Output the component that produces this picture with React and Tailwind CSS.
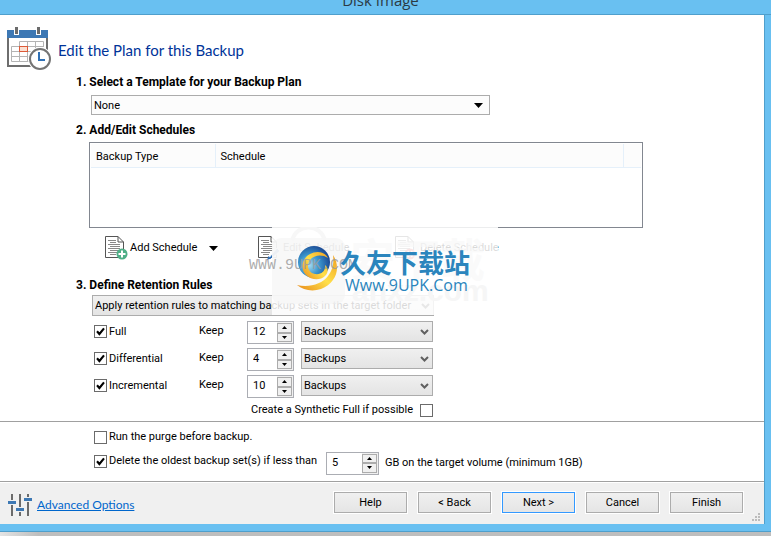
import React from "react";

function Heading({ children }) {
  return (
    <h2 className="pl-[76px] text-[12px] leading-4 font-bold text-black font-['Roboto',sans-serif]">
      {children}
    </h2>
  );
}

function Check({ id, checked = false }) {
  return (
    <span className="grid size-[13px] shrink-0">
      <input
        id={id}
        type="checkbox"
        defaultChecked={checked}
        className="peer col-start-1 row-start-1 size-[13px] appearance-none border border-[#6b6b6b] bg-white"
      />
      <svg
        viewBox="0 0 13 13"
        className="pointer-events-none invisible col-start-1 row-start-1 size-[13px] peer-checked:visible"
      >
        <path d="M3 6.2 L5.4 9 L10 3.4" fill="none" stroke="#000" strokeWidth="2.1" />
      </svg>
    </span>
  );
}

function Select({ label, value, className }) {
  return (
    <span className={`grid h-[21px] items-center ${className}`}>
      <select
        aria-label={label}
        className="col-start-1 row-start-1 h-[21px] w-full appearance-none border border-[#acacac] bg-linear-to-b from-[#f0f0f0] to-[#e4e4e4] pt-px pl-[2px] leading-4"
      >
        <option>{value}</option>
      </select>
      <svg
        viewBox="0 0 9 6"
        className="pointer-events-none col-start-1 row-start-1 mr-1 h-[6px] w-[9px] justify-self-end"
      >
        <path d="M1 1 L4.5 4.5 L8 1" fill="none" stroke="#606060" strokeWidth="2" />
      </svg>
    </span>
  );
}

function Spinner({ label, value, className }) {
  const button =
    "flex h-[10px] w-[15px] items-center justify-center border border-[#acacac] bg-[#f0f0f0]";
  return (
    <span className={`flex h-[23px] shrink-0 border border-[#abadb3] bg-white ${className}`}>
      <input
        aria-label={label}
        defaultValue={value}
        className="h-[19px] w-0 min-w-0 flex-1 bg-transparent pl-[5px] leading-4 outline-none"
      />
      <span className="flex flex-col justify-between bg-[#f0f0f0] p-px pl-0">
        <button type="button" aria-label={`Increase ${label}`} className={button}>
          <svg viewBox="0 0 5 3" className="h-[3px] w-[5px]">
            <path d="M0 3 L2.5 0 L5 3 Z" />
          </svg>
        </button>
        <button type="button" aria-label={`Decrease ${label}`} className={button}>
          <svg viewBox="0 0 5 3" className="h-[3px] w-[5px]">
            <path d="M0 0 L2.5 3 L5 0 Z" />
          </svg>
        </button>
      </span>
    </span>
  );
}

function Rule({ id, name, count }) {
  return (
    <div className="flex h-[23px] items-start">
      <div className="flex h-[21px] w-[105px] items-center gap-[2px]">
        <Check id={id} checked />
        <label htmlFor={id}>{name}</label>
      </div>
      <span className="w-12 leading-5">Keep</span>
      <Spinner label={`${name} backups to keep`} value={count} className="w-[47px]" />
      <Select label={`${name} unit`} value="Backups" className="ml-[7px] w-[132px]" />
    </div>
  );
}

function CalendarIcon() {
  return (
    <svg viewBox="0 0 44 43" className="h-[43px] w-[44px]">
      <rect x="1" y="4" width="39" height="35" fill="#fff" stroke="#6e6e6e" strokeWidth="2" />
      <rect x="0" y="3" width="41" height="8" fill="#3d78b4" />
      <path d="M7 0 H12 V8 H7 Z M29 0 H34 V8 H29 Z" fill="#fff" />
      <path d="M8 0 H11 V7 H8 Z M30 0 H33 V7 H30 Z" fill="#6b6b6b" />
      <path
        d="M12.5 14.5 H36.5 V20 M4.5 19.5 H36.5 M4.5 24.5 H30 M4.5 29.5 H24 M4.5 34.5 H24 M4.5 19.5 V34.5 M12.5 14.5 V34.5 M20.5 14.5 V34.5 M28.5 14.5 V24"
        fill="none"
        stroke="#b4b4b4"
      />
      <rect x="12.5" y="19.5" width="8" height="5" fill="#fbe0d2" stroke="#dd5a38" />
      <circle cx="33" cy="32" r="12" fill="#fff" />
      <circle cx="33" cy="32" r="10" fill="#fff" stroke="#747474" strokeWidth="2" />
      <path d="M32 25 V33 H38" fill="none" stroke="#2f70b5" strokeWidth="2" />
    </svg>
  );
}

function PageIcon({ kind }) {
  return (
    <svg viewBox="0 0 24 25" className="h-[25px] w-6">
      <path d="M0.5 0.5 H13 L18.5 6 V21.5 H0.5 Z" fill="#fff" stroke="#555" />
      <path d="M13 0.5 V6 H18.5" fill="none" stroke="#555" />
      <path
        d="M3 4.5 H11 M5 6.5 H11 M3 8.5 H15 M5 10.5 H15 M3 12.5 H15 M5 14.5 H15 M3 16.5 H12 M5 18.5 H11"
        stroke="#888"
      />
      {kind === "add" && (
        <g>
          <circle cx="17" cy="18" r="5.5" fill="#4faf87" />
          <path d="M17 14.5 V21.5 M13.5 18 H20.5" stroke="#fff" strokeWidth="2" />
        </g>
      )}
      {kind === "edit" && (
        <g>
          <path d="M10 23 L19 12 L22 15 L13 23 Z" fill="#2e6db4" stroke="#fff" />
          <path d="M9 24 L10.5 20 L13 22.5 Z" fill="#2e6db4" />
        </g>
      )}
      {kind === "delete" && (
        <g>
          <circle cx="15" cy="18" r="5.5" fill="#d9534f" />
          <path d="M12.5 15.5 L17.5 20.5 M17.5 15.5 L12.5 20.5" stroke="#fff" strokeWidth="2" />
        </g>
      )}
    </svg>
  );
}

function SlidersIcon() {
  return (
    <svg viewBox="0 0 24 22" className="h-[22px] w-6">
      <path d="M4 0 V22 M12 0 V22 M20 0 V22" stroke="#6b6b6b" strokeWidth="2" />
      <path d="M0 6 H8 V11 H0 Z M8 13 H16 V18 H8 Z M16 3 H24 V8 H16 Z" fill="#f0f0f0" />
      <path d="M0 7 H8 V10 H0 Z M8 14 H16 V17 H8 Z M16 4 H24 V7 H16 Z" fill="#3d78b4" />
    </svg>
  );
}

function Globe() {
  return (
    <svg viewBox="0 0 42 46" className="h-[46px] w-[42px]">
      <defs>
        <radialGradient id="ball" cx="0.35" cy="0.6" r="0.65">
          <stop offset="0" stopColor="#a5dcf2" />
          <stop offset="0.5" stopColor="#3a94cc" />
          <stop offset="1" stopColor="#1c4c96" />
        </radialGradient>
        <linearGradient id="swirl" x1="0" y1="1" x2="1" y2="0">
          <stop offset="0" stopColor="#e88a1a" />
          <stop offset="0.5" stopColor="#ffe04a" />
          <stop offset="1" stopColor="#f0a020" />
        </linearGradient>
      </defs>
      <circle cx="17" cy="17" r="16" fill="url(#ball)" />
      <path
        d="M31 13 C28 7 20 5 13 9 C5 13 3 24 9 30 C14 35 23 36 28 31 C32 27 31 22 28 20 C29 26 24 30 18 29 C11 28 9 20 13 15 C17 10 25 9 31 13 Z"
        fill="url(#swirl)"
      />
      <path
        d="M36 10 C44 22 40 38 24 44 C15 47 6 45 0 40 C12 43 25 39 31 31 C36 25 37 17 36 10 Z"
        fill="url(#swirl)"
      />
    </svg>
  );
}

function Watermark() {
  return (
    <div aria-hidden="true" className="pointer-events-none absolute top-[227px] left-[249px] h-[88px] w-[249px]">
      <div className="absolute inset-y-0 right-0 left-[23px] bg-white/85" />
      <svg viewBox="0 0 75 80" className="absolute top-0 left-[23px] h-20 w-[75px]">
        <rect x="0" y="11" width="73" height="66" rx="9" fill="#f3f3f3" fillOpacity="0.6" />
        <path d="M20 14 C24 -4 49 -4 53 14" fill="none" stroke="#f7f7f7" strokeWidth="4" />
      </svg>
      <div className="absolute top-2 left-[101px] text-[45px] leading-[46px] font-bold whitespace-nowrap text-[#f8f8f8]/70 font-['Noto_Sans_CJK_SC',sans-serif]">
        安下载
      </div>
      <div className="absolute top-[48px] left-[103px] text-[30px] leading-8 font-bold whitespace-nowrap text-[#f6f6f6] font-['Liberation_Sans',sans-serif]">
        anxz.com
      </div>
      <div className="absolute top-[18px] left-12">
        <Globe />
      </div>
      <div className="absolute top-[31px] left-0 text-[15px] leading-4 whitespace-nowrap text-[#999]/80 font-['Liberation_Mono',monospace]">
        WWW.9UPK.COM
      </div>
      <div className="absolute top-[19px] left-[91px] text-[26px] leading-8 font-bold whitespace-nowrap text-[#2b85bd] font-['Noto_Sans_CJK_SC',sans-serif]">
        久友下载站
      </div>
      <div className="absolute top-[48px] left-24 text-[16px] leading-5 whitespace-nowrap text-[#2b85bd] font-['Open_Sans',sans-serif]">
        Www.9UPK.Com
      </div>
    </div>
  );
}

function Tool({ kind, children }) {
  return (
    <button type="button" className="flex items-center gap-px whitespace-nowrap">
      <PageIcon kind={kind} />
      {children}
    </button>
  );
}

export default function App() {
  const buttons = ["Help", "< Back", "Next >", "Cancel", "Finish"];
  return (
    <div className="relative text-[11px] leading-4 text-black font-['Roboto','Noto_Sans',sans-serif]">
      <div className="border-b border-[#4f9fcc] bg-[#69c0f1] pr-[10px]">
        <header className="flex h-[14px] items-end justify-center overflow-hidden text-[15px] leading-5 text-[#2b3a44] font-['Open_Sans',sans-serif]">
          <h1 className="pb-[4px]">Disk Image</h1>
        </header>
      </div>
      <div className="bg-[#69c0f1] pr-[6px]">
        <div className="border-r border-[#4f9fcc] bg-white">
          <main className="border-b border-[#a0a0a0] pt-3 pb-[3px]">
            <div className="flex h-[47px] gap-[7px] pl-[7px]">
              <CalendarIcon />
              <p className="pt-[13px] text-[15px] leading-5 text-[#003399] font-['Lato',sans-serif]">
                Edit the Plan for this Backup
              </p>
            </div>
            <Heading>1. Select a Template for your Backup Plan</Heading>
            <div className="mt-[5px] ml-[91px] grid h-5 max-w-[399px] items-center">
              <select
                aria-label="Backup plan template"
                className="col-start-1 row-start-1 h-5 w-full appearance-none border border-[#acacac] bg-[#fcfcfc] pt-px pl-[2px] leading-4"
              >
                <option>None</option>
              </select>
              <svg
                viewBox="0 0 9 5"
                className="pointer-events-none col-start-1 row-start-1 mr-[7px] h-[5px] w-[9px] justify-self-end"
              >
                <path d="M0 0 H9 L4.5 5 Z" />
              </svg>
            </div>
            <div className="pt-[7px]">
              <Heading>2. Add/Edit Schedules</Heading>
            </div>
            <div className="mt-1 mr-[121px] ml-[89px] h-[86px] border border-[#828790] p-px">
              <table className="w-full table-fixed border-collapse bg-[#fcfcfc] text-left">
                <thead>
                  <tr className="h-[23px] border-b border-[#e5f0fa]">
                    <th className="w-[124px] border-r border-[#e5f0fa] pt-[3px] pl-[5px] font-normal">Backup Type</th>
                    <th className="border-r border-[#e5f0fa] pt-[3px] pl-[5px] font-normal">Schedule</th>
                    <td className="w-[18px]" />
                  </tr>
                </thead>
              </table>
            </div>
            <div className="flex h-[40px] items-center pl-[105px]">
              <div className="flex w-[153px] items-center">
                <Tool kind="add">Add Schedule</Tool>
                <button type="button" aria-label="More schedule types" className="ml-3">
                  <svg viewBox="0 0 9 5" className="h-[5px] w-[9px]">
                    <path d="M0 0 H9 L4.5 5 Z" />
                  </svg>
                </button>
              </div>
              <div className="w-[137px]">
                <Tool kind="edit">Edit Schedule</Tool>
              </div>
              <Tool kind="delete">Delete Schedule</Tool>
            </div>
            <div className="pt-[9px]">
              <Heading>3. Define Retention Rules</Heading>
            </div>
            <Select
              label="Retention scope"
              value="Apply retention rules to matching backup sets in the target folder"
              className="mt-[2px] ml-[92px] max-w-[342px]"
            />
            <div className="mt-[5px] flex flex-col gap-1 pl-[94px]">
              <Rule id="full" name="Full" count="12" />
              <Rule id="differential" name="Differential" count="4" />
              <Rule id="incremental" name="Incremental" count="10" />
            </div>
            <div className="mt-1 flex w-[433px] items-center justify-end gap-[7px]">
              <label htmlFor="synthetic">Create a Synthetic Full if possible</label>
              <Check id="synthetic" />
            </div>
          </main>
          <section className="border-b border-[#a0a0a0] pt-[7px] pb-[6px] pl-[94px]">
            <div className="flex items-center gap-[2px]">
              <Check id="purge" />
              <label htmlFor="purge">Run the purge before backup.</label>
            </div>
            <div className="mt-[6px] flex h-[24px] items-center">
              <div className="flex w-[232px] items-center gap-[2px] pb-1">
                <Check id="oldest" checked />
                <label htmlFor="oldest">Delete the oldest backup set(s) if less than</label>
              </div>
              <Spinner label="Minimum free gigabytes" value="5" className="w-[53px]" />
              <span className="ml-[6px]">GB on the target volume (minimum 1GB)</span>
            </div>
          </section>
          <footer className="mt-px flex h-[41px] items-center bg-[#f0f0f0] pr-[6px] pl-2">
            <div className="flex items-center gap-[5px] pt-[3px]">
              <SlidersIcon />
              <a href="#advanced" className="text-[12px] leading-5 text-[#0066cc] underline font-['Lato',sans-serif]">
                Advanced Options
              </a>
            </div>
            <div className="ml-auto flex gap-[11px] pr-[5px] pb-[2px]">
              {buttons.map((name) => (
                <button
                  key={name}
                  type="button"
                  className={`h-[21px] w-[73px] border bg-linear-to-b from-[#f0f0f0] to-[#e5e5e5] pt-px outline outline-white ${
                    name === "Next >" ? "border-[#3399ff]" : "border-[#acacac]"
                  }`}
                >
                  {name}
                </button>
              ))}
            </div>
            <svg viewBox="0 0 8 8" className="mr-[-2px] mb-[3px] ml-1 h-2 w-2 self-end">
              <path
                d="M6 0 H8 V2 H6 Z M3 3 H5 V5 H3 Z M6 3 H8 V5 H6 Z M0 6 H2 V8 H0 Z M3 6 H5 V8 H3 Z M6 6 H8 V8 H6 Z"
                fill="#bcbcbc"
              />
            </svg>
          </footer>
        </div>
      </div>
      <div className="h-2 border-b border-[#4f9fcc] bg-[#69c0f1]" />
      <div className="h-1 bg-linear-to-r from-[#e4e4e4] to-[#bebebe] to-5%" />
      <Watermark />
    </div>
  );
}
